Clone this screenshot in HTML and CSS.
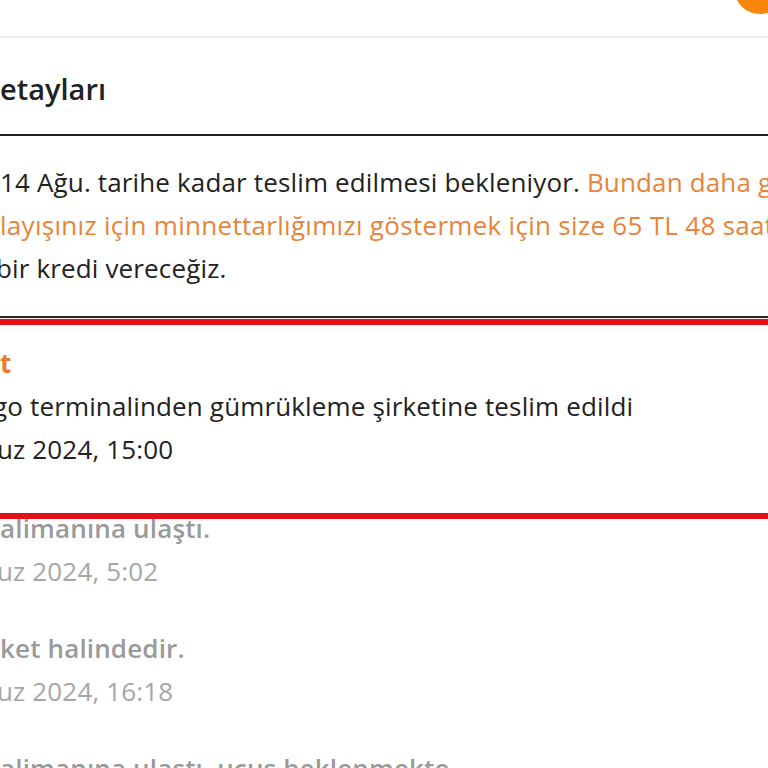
FILE: index.html
```html
<!DOCTYPE html>
<html lang="tr">
<head>
    <meta charset="UTF-8">
    <meta name="viewport" content="width=device-width, initial-scale=1.0">
    <title>Kargo Detayları</title>
    <link rel="stylesheet" href="styles.css">
</head>
<body>
    <div class="topbar">
        <div class="avatar"></div>
    </div>

    <div class="details">
        <h2 class="title">etayları</h2>

        <div class="notice">
            <p class="notice-text">
                <span class="line">14 Ağu. tarihe kadar teslim edilmesi bekleniyor. <span class="accent">Bundan daha geç</span></span>
                <span class="line accent">layışınız için minnettarlığımızı göstermek için size 65 TL 48 saat</span>
                <span class="line cut-b">bir kredi vereceğiz.</span>
            </p>
        </div>

        <div class="timeline">
            <div class="event current">
                <div class="event-label">t</div>
                <div class="event-title cut-g">go terminalinden gümrükleme şirketine teslim edildi</div>
                <div class="event-date cut-u">uz 2024, 15:00</div>
            </div>
            <div class="event past">
                <div class="event-title">alimanına ulaştı.</div>
                <div class="event-date cut-u">uz 2024, 5:02</div>
            </div>
            <div class="event past">
                <div class="event-title">ket halindedir.</div>
                <div class="event-date cut-u">uz 2024, 16:18</div>
            </div>
            <div class="event past">
                <div class="event-title">alimanına ulaştı, uçuş beklenmekte.</div>
            </div>
        </div>
    </div>
</body>
</html>
```

FILE: styles.css
```css
body {
    margin: 0;
    background-color: #fff;
    font-family: "Open Sans", "Noto Sans", sans-serif;
    color: #222;
    overflow: hidden;
    height: 768px;
}
.topbar {
    position: relative;
    height: 36px;
    border-bottom: 2px solid #ededed;
}
.avatar {
    position: absolute;
    top: -38px;
    right: -18px;
    width: 52px;
    height: 52px;
    border-radius: 50%;
    background-color: #f7860f;
}
.title {
    margin: 0;
    height: 98px;
    line-height: 102px;
    font-size: 29px;
    font-weight: 600;
    color: #222;
    border-bottom: 2px solid #222;
    box-sizing: border-box;
}
.notice {
    height: 180px;
    border-bottom: 2px solid #3a1a1a;
}
.notice-text {
    margin: 0;
    padding-top: 25px;
    font-size: 26px;
    line-height: 43px;
    letter-spacing: 0.15px;
    white-space: nowrap;
}
.line {
    display: block;
}
.accent {
    color: #e8843a;
}
.notice-text .line.accent {
    letter-spacing: 0.3px;
}
.cut-b {
    text-indent: -4px;
}
.cut-g {
    text-indent: -7px;
}
.cut-u {
    text-indent: -3px;
}
.timeline {
    white-space: nowrap;
}
.event {
    font-size: 26px;
    line-height: 43px;
    letter-spacing: 0.15px;
}
.current {
    position: relative;
    height: 189px;
    padding-top: 24px;
    box-sizing: border-box;
}
.current::after {
    content: "";
    position: absolute;
    top: 1px;
    bottom: -12px;
    left: -10px;
    right: -10px;
    border: 6px solid #e3101b;
}
.event-label {
    color: #ee7a2b;
    font-weight: 700;
}
.past {
    height: 120px;
    color: #9a9a9a;
}
.past .event-title {
    font-weight: 600;
}
.past .event-date {
    color: #a6a6a6;
}
```
